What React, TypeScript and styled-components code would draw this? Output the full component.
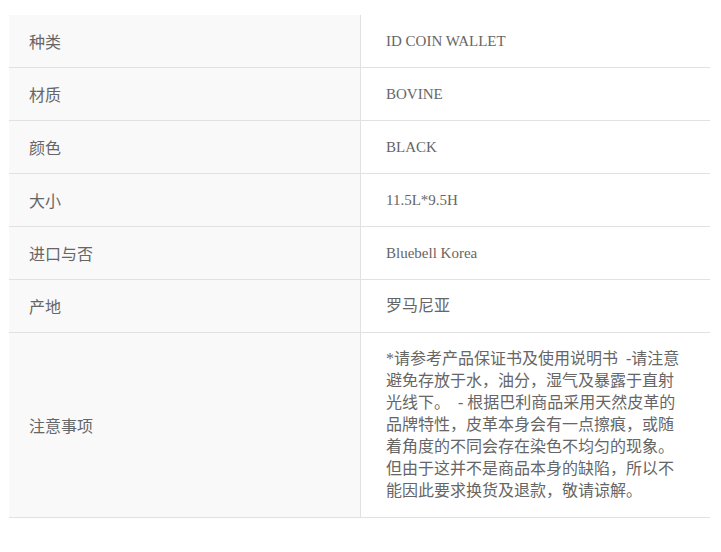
import React from "react";
import styled, { createGlobalStyle } from "styled-components";

const GlobalStyle = createGlobalStyle`
    body {
        margin: 0;
        background: #fff;
    }
`;

const Page = styled.div`
    padding: 15px 11px 0 9px;
`;

const SpecTable = styled.table`
    width: 701px;
    border-collapse: collapse;
    table-layout: fixed;
`;

const Row = styled.tr`
    border-bottom: 1px solid #e1e1e1;
`;

const Label = styled.th`
    width: 331px;
    padding: 15px 0 15px 20px;
    background: #f9f9f9;
    border-right: 1px solid #e1e1e1;
    text-align: left;
    font-weight: normal;
    font-family: "Noto Sans CJK SC", sans-serif;
    font-size: 16px;
    line-height: 22px;
    color: #666;
`;

const Value = styled.td<{ $latin?: boolean }>`
    padding: 15px 24px 15px 25px;
    font-family: "Liberation Serif", "Noto Sans CJK SC", serif;
    font-size: ${(p) => (p.$latin ? "15px" : "16px")};
    line-height: 22px;
    color: #666;
    vertical-align: middle;
`;

const Notice = styled.div`
    width: 300px;
    white-space: pre-wrap;
`;

const specs: { label: string; value: string; latin?: boolean }[] = [
    { label: "种类", value: "ID COIN WALLET", latin: true },
    { label: "材质", value: "BOVINE", latin: true },
    { label: "颜色", value: "BLACK", latin: true },
    { label: "大小", value: "11.5L*9.5H", latin: true },
    { label: "进口与否", value: "Bluebell Korea", latin: true },
    { label: "产地", value: "罗马尼亚" },
];

const notice =
    "*请参考产品保证书及使用说明书  -请注意避免存放于水，油分，湿气及暴露于直射光线下。  - 根据巴利商品采用天然皮革的品牌特性，皮革本身会有一点擦痕，或随着角度的不同会存在染色不均匀的现象。但由于这并不是商品本身的缺陷，所以不能因此要求换货及退款，敬请谅解。";

export default function App() {
    return (
        <Page>
            <GlobalStyle />
            <SpecTable>
                <tbody>
                    {specs.map((s) => (
                        <Row key={s.label}>
                            <Label>{s.label}</Label>
                            <Value $latin={s.latin}>{s.value}</Value>
                        </Row>
                    ))}
                    <Row>
                        <Label>注意事项</Label>
                        <Value>
                            <Notice>{notice}</Notice>
                        </Value>
                    </Row>
                </tbody>
            </SpecTable>
        </Page>
    );
}
